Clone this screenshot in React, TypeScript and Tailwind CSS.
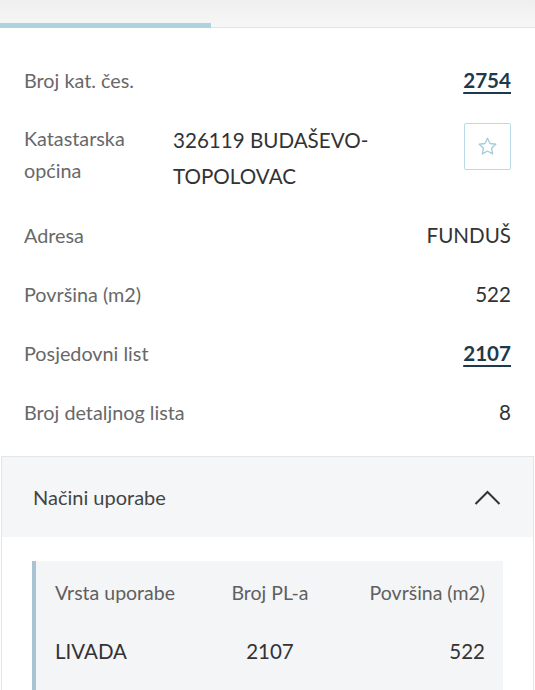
import React from "react";

const font = { fontFamily: '"Lato", "Noto Sans", sans-serif' };

function Row({ label, value, link }: { label: string; value: string; link?: boolean }) {
  return (
    <div className="flex items-start justify-between py-[12px]">
      <div className="text-[19.8px] leading-[35px] text-[#686868]">{label}</div>
      <div
        className={
          link
            ? "text-[20.6px] leading-[35px] font-bold text-[#1c3a4c] underline underline-offset-[4px] decoration-[2px]"
            : "text-[20.6px] leading-[35px] text-[#333333]"
        }
      >
        {value}
      </div>
    </div>
  );
}

export default function App() {
  return (
    <div className="w-[535px] h-[690px] overflow-hidden bg-white" style={font}>
      <div className="h-[28px] bg-gradient-to-b from-[#efefef] to-[#f7f7f7] flex flex-col justify-end">
        <div className="flex items-end">
          <div className="w-[211px] h-[5px] bg-[#aed3e0]" />
          <div className="flex-1 h-[1px] bg-[#e2e2e2]" />
        </div>
      </div>
      <div className="px-[24px] pt-[23px]">
        <Row label="Broj kat. čes." value="2754" link />
        <div className="flex items-start py-[12px]">
          <div className="w-[149px] text-[19.8px] leading-[32px] text-[#686868]">
            Katastarska
            <br />
            općina
          </div>
          <div className="flex-1 text-[20.6px] leading-[36px] text-[#333333] pr-[60px]">
            326119 BUDAŠEVO-TOPOLOVAC
          </div>
          <button className="mt-[1px] w-[47px] h-[47px] border border-[#b8dbe5] rounded-[2px] flex items-center justify-center bg-white">
            <svg width="21" height="21" viewBox="0 0 24 24" fill="none" stroke="#a3cddb" strokeWidth="1.5" strokeLinejoin="round">
              <polygon points="12,2.5 14.9,8.6 21.5,9.4 16.6,13.9 17.9,20.5 12,17.2 6.1,20.5 7.4,13.9 2.5,9.4 9.1,8.6" />
            </svg>
          </button>
        </div>
        <Row label="Adresa" value="FUNDUŠ" />
        <Row label="Površina (m2)" value="522" />
        <Row label="Posjedovni list" value="2107" link />
        <Row label="Broj detaljnog lista" value="8" />
      </div>
      <div className="mt-[14px] mx-[1px] border border-[#e3e5e8] border-b-0">
        <div className="h-[80px] bg-[#f5f6f8] flex items-center justify-between pl-[31px] pr-[32px]">
          <span className="text-[20px] text-[#444444]">Načini uporabe</span>
          <svg width="27" height="15" viewBox="0 0 27 15" fill="none" stroke="#333333" strokeWidth="2">
            <polyline points="1.5,14 13.5,2 25.5,14" />
          </svg>
        </div>
        <div className="bg-white px-[30px] pt-[24px]">
          <div className="bg-[#f4f5f7] border-l-[4px] border-[#a9c3d3] pl-[19px] pr-[18px] pt-[14px] pb-[23px]">
            <div className="grid grid-cols-3 items-center h-[36px] text-[19.5px] text-[#5f5f5f]">
              <div>Vrsta uporabe</div>
              <div className="text-center">Broj PL-a</div>
              <div className="text-right">Površina (m2)</div>
            </div>
            <div className="grid grid-cols-3 items-center h-[36px] mt-[22px] text-[20.5px] text-[#333333]">
              <div>LIVADA</div>
              <div className="text-center">2107</div>
              <div className="text-right">522</div>
            </div>
          </div>
        </div>
      </div>
    </div>
  );
}
